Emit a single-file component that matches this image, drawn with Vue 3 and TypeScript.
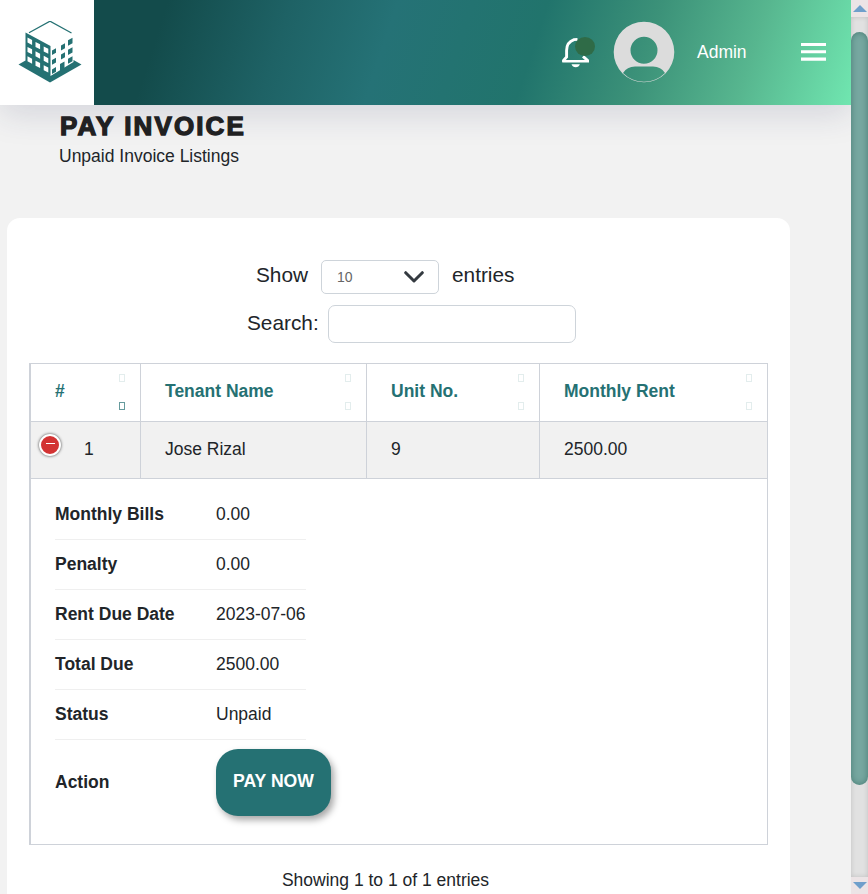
<script setup lang="ts">
interface Detail { label: string; value: string }

const columns: string[] = ['#', 'Tenant Name', 'Unit No.', 'Monthly Rent']
const details: Detail[] = [
  { label: 'Monthly Bills', value: '0.00' },
  { label: 'Penalty', value: '0.00' },
  { label: 'Rent Due Date', value: '2023-07-06' },
  { label: 'Total Due', value: '2500.00' },
  { label: 'Status', value: 'Unpaid' },
]
</script>

<template>
  <div class="viewport">
    <div class="page">
      <header class="topbar">
        <div class="brand">
          <svg width="64" height="62" viewBox="18 21 64 62">
            <g fill="#257173">
              <path d="M29 32.8 50 21.2 71.5 33" fill="none" stroke="#257173" stroke-width="1.3" />
              <path d="M25.5 32.500 50.500 46V76L73.500 62V60L81.500 64.500 50 82.500 18.500 64.500 25.500 60.500Z" />
              <path d="M52 50.500l4-2.300v4.500l-4 2.300zM61 45.500l4-2.300v5l-4 2.300zM68 40.200l4.500-2.400v5.500l-4.500 2.400zM52 60l4-2.300v4.700l-4 2.300zM61 54.500l4-2.300v5l-4 2.300zM68 49.700l4.500-2.400v5.200l-4.500 2.400zM52 69.400l4-2.300v4.700l-4 2.300zM60 64l4.500-2.600v7.300l-4.500 2.600zM68 58.700l4.500-2.400v5l-4.500 2.400z" />
            </g>
            <path fill="#fff" d="M27.500 37.500l4.600 2.400v5l-4.600-2.400zM35.500 41.900l4.600 2.400v5l-4.600-2.400zM43.700 46.400l4.600 2.400v5l-4.600-2.400zM27.500 46.900l4.600 2.400v5l-4.600-2.400zM35.500 51.300l4.600 2.400v5l-4.600-2.400zM43.700 55.800l4.600 2.400v5l-4.600-2.400zM27.500 56.300l4.600 2.400v5l-4.600-2.400zM35.500 60.700l4.600 2.400v5l-4.600-2.400zM43.700 65.200l4.600 2.400v5l-4.600-2.400z" />
          </svg>
        </div>
        <nav class="actions">
          <span class="bell">
            <svg width="28" height="31" viewBox="0 0 28 31">
              <path d="M1.700 25v-1.700l2.900-3.300V13.500C4.600 8 7.500 4.200 12 2.600l3.500-.2M25.500 25v-1.700l-4.500-4" fill="none" stroke="#fff" stroke-width="2.900" />
              <path d="M.3 22.900h26.700v2.600H.3zM9.500 27.300h8.400q-1 3-4.200 3t-4.200-3z" fill="#fff" />
            </svg>
            <i class="dot" />
          </span>
          <svg class="avatar" width="62" height="62" viewBox="0 0 62 62">
            <path fill="#dcdcdc" fill-rule="evenodd" d="M31 .7a30.300 30.300 0 1 0 0 60.600 30.300 30.300 0 1 0 0-60.600ZM31 15.800a13.500 13.500 0 1 1 0 27 13.500 13.500 0 1 1 0-27ZM22 45.500h18q8 0 12 6.500A29.600 29.600 0 0 1 10 52q4-6.500 12-6.500Z" />
          </svg>
          <span class="user">Admin</span>
          <svg class="menu" width="25" height="18" viewBox="0 0 25 18"><path fill="#fff" d="M0 0h25v3H0zM0 7.200h25v3H0zM0 14.600h25v3.200H0z" /></svg>
        </nav>
      </header>

      <section class="title">
        <h1>PAY INVOICE</h1>
        <p>Unpaid Invoice Listings</p>
      </section>

      <main class="card">
        <div class="length">
          <span>Show</span>
          <div class="select">
            <span>10</span>
            <svg width="20" height="12" viewBox="0 0 20 12"><path d="M1.700 1.700l8.300 8.300L18.300 1.700" fill="none" stroke="#343a40" stroke-width="3" stroke-linecap="round" stroke-linejoin="round" /></svg>
          </div>
          <span>entries</span>
        </div>
        <label class="search">Search:<input type="text" /></label>

        <div class="table">
          <div class="row head">
            <div v-for="(name, i) in columns" :key="name" class="cell">
              <span>{{ name }}</span>
              <span class="sort"><i /><i :class="{ on: i === 0 }" /></span>
            </div>
          </div>
          <div class="row body">
            <div class="cell first">
              <span class="toggle"><i /></span><span>1</span>
            </div>
            <div class="cell">Jose Rizal</div>
            <div class="cell">9</div>
            <div class="cell">2500.00</div>
          </div>
          <div class="child">
            <dl>
              <div v-for="d in details" :key="d.label" class="detail">
                <dt>{{ d.label }}</dt>
                <dd>{{ d.value }}</dd>
              </div>
              <div class="detail action">
                <dt>Action</dt>
                <dd><button type="button">PAY NOW</button></dd>
              </div>
            </dl>
          </div>
        </div>
        <p class="info">Showing 1 to 1 of 1 entries</p>
      </main>
    </div>

    <aside class="scrollbar">
      <span class="arrow"><i class="up" /></span>
      <div class="track"><div class="thumb" /></div>
      <span class="arrow"><i class="down" /></span>
    </aside>
  </div>
</template>

<style>
body { margin: 0; overflow: hidden; }
</style>

<style scoped>
* { box-sizing: border-box; }
.viewport {
  display: flex;
  width: 868px;
  height: 894px;
  overflow: hidden;
  background: #f2f2f2;
  color: #212529;
  font: 17.5px/26px "Liberation Sans", Arial, sans-serif;
}
.page { width: 851px; height: 894px; overflow: hidden; }
.topbar {
  position: relative;
  z-index: 1;
  display: flex;
  height: 105px;
  background: linear-gradient(108deg, #134b4b 19%, #1e6265 33%, #257276 45%, #21746c 62%, #3c9279 75%, #57b68f 87%, #70e6b0 100%);
  box-shadow: 0 8px 32px rgba(31, 38, 85, .15);
}
.brand {
  width: 94px;
  padding: 21px 0 0 18px;
  background: #fff;
}
.brand svg { display: block; }
.actions {
  display: flex;
  flex: 1;
  align-items: center;
  justify-content: flex-end;
  padding: 0 25px 2px 0;
  color: #fff;
}
.bell { position: relative; width: 28px; height: 31px; margin: 2px 23px 0 0; }
.bell svg { display: block; }
.dot {
  position: absolute;
  top: 0;
  left: 13px;
  width: 20px;
  height: 19px;
  border-radius: 50%;
  background: #2f6b47;
}
.avatar { margin-right: 22px; }
.user { width: 51px; margin-right: 53px; }
.menu { margin-top: 1px; }
.title { height: 113px; padding: 7px 0 0 60px; }
h1 {
  margin: 0;
  color: #212121;
  font-size: 26px;
  line-height: 28px;
  letter-spacing: 2.1px;
  -webkit-text-stroke: 1.3px #212121;
}
p { margin: 0; }
.title p { margin: 3px 0 0 -1px; }
.card {
  width: 783px;
  height: 700px;
  margin-left: 7px;
  padding: 42px 22px 0;
  border-radius: 13px;
  background: #fff;
}
.length, .search {
  display: flex;
  font-size: 20.8px;
}
.length { padding-left: 227px; line-height: 29px; }
.search { height: 38px; margin-top: 11px; padding-left: 218px; line-height: 36px; }
.select {
  display: flex;
  align-items: center;
  justify-content: space-between;
  width: 118px;
  height: 34px;
  margin: 0 13px;
  padding: 0 14px 0 15px;
  border: 1px solid #ced4da;
  border-radius: 5px;
  color: #666;
  font-size: 14px;
}
.search input {
  width: 248px;
  height: 38px;
  margin: 0 0 0 9px;
  border: 1px solid #ced4da;
  border-radius: 7px;
}
.table {
  width: 739px;
  height: 482px;
  margin-top: 20px;
  border: 1px solid #ced2d9;
  border-left-width: 2px;
}
.row { display: grid; grid-template-columns: 110px 226px 173px 227px; border-bottom: 1px solid #ced2d9; }
.cell {
  display: flex;
  align-items: center;
  padding-left: 24px;
  border-right: 1px solid #ced2d9;
}
.cell:last-child { border-right: 0; }
.head { height: 58px; color: #257173; font-weight: 700; }
.head .cell { justify-content: space-between; padding: 0 15px 4px 24px; }
.sort { display: flex; flex-direction: column; gap: 20px; padding-top: 2px; }
.sort i { width: 6px; height: 8px; border: 1px solid #257173; opacity: .13; }
.sort i.on { opacity: .7; }
.body { height: 57px; background: #f1f1f1; }
.body .cell { padding-bottom: 2px; }
.body .first { padding-left: 8px; }
.toggle {
  display: flex;
  align-items: center;
  justify-content: center;
  width: 22px;
  height: 22px;
  margin: -8px 23px 0 0;
  border: 2px solid #fff;
  border-radius: 50%;
  background: #d33333;
  box-shadow: 0 0 3px #444;
}
.toggle i { width: 9px; height: 1px; margin-top: -3px; background: #fff; }
.child { padding: 11px 24px; }
dl { width: 251px; margin: 0; }
.detail {
  display: flex;
  align-items: center;
  height: 50px;
  padding-bottom: 2px;
  border-bottom: 1px solid #efefef;
}
dt { flex: none; width: 161px; font-weight: 700; }
dd { margin: 0; white-space: nowrap; }
.action { height: 84px; padding: 0; border: 0; }
button {
  display: block;
  width: 115px;
  height: 67px;
  margin: 0;
  padding: 0 0 1px;
  border: 0;
  border-radius: 22px;
  background: #257173;
  color: #fff;
  box-shadow: 3px 4px 7px rgba(0, 0, 0, .35);
  font: 700 17.6px "Liberation Sans", Arial, sans-serif;
}
.info { margin-top: 22px; padding-right: 26px; text-align: center; }
.scrollbar { display: flex; flex-direction: column; width: 17px; background: #ece4e6; }
.arrow { display: flex; align-items: center; justify-content: center; height: 17px; }
.arrow i { border: 7px solid transparent; }
.arrow .up { border-top: 0; border-bottom-color: #6f9fcb; }
.arrow .down { border-bottom: 0; border-top-color: #6f9fcb; }
.track {
  flex: 1;
  padding-top: 15px;
  background: #e1e1e1;
  box-shadow: inset 0 0 5px rgba(0, 0, 0, .15);
}
.thumb {
  height: 753px;
  border-radius: 8.5px;
  background: #76a7a0;
  box-shadow: inset 0 0 6px rgba(0, 60, 50, .4);
}
</style>
